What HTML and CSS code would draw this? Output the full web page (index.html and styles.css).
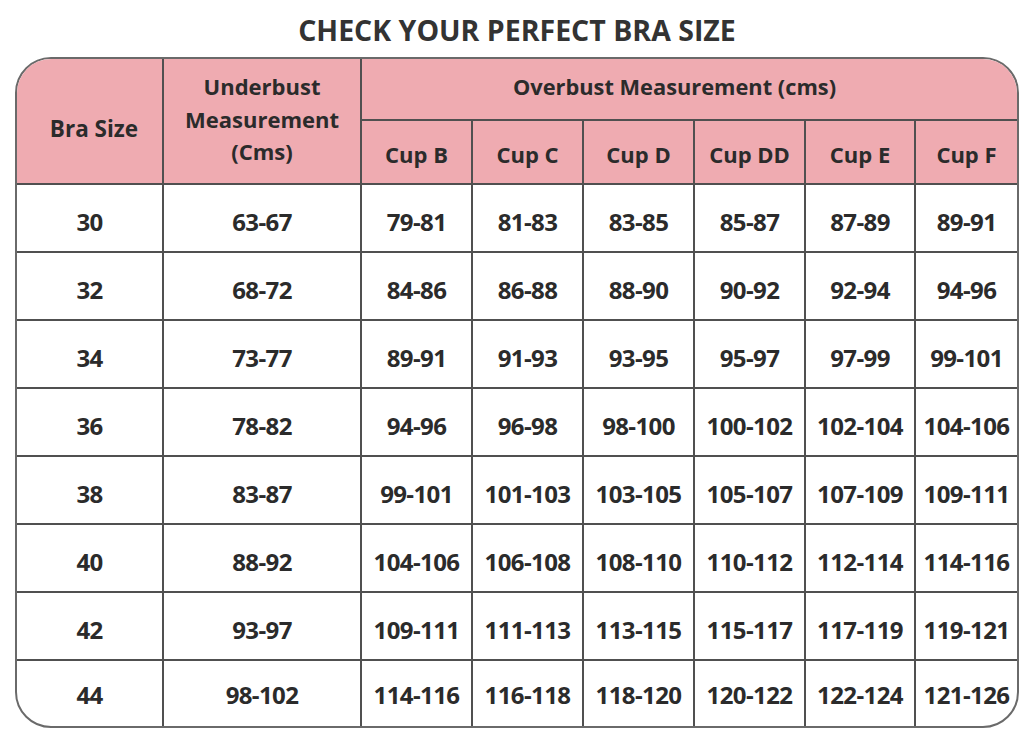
FILE: index.html
```html
<!DOCTYPE html>
<html lang="en">
<head>
<meta charset="utf-8">
<title>Check Your Perfect Bra Size</title>
<link rel="stylesheet" href="styles.css">
</head>
<body>
<h1 class="title">CHECK YOUR PERFECT BRA SIZE</h1>
<div class="chart">
  <div class="cell head span-rows size-head">Bra Size</div>
  <div class="cell head span-rows multi">Underbust<br>Measurement<br>(Cms)</div>
  <div class="cell head span-cols last-col">Overbust Measurement (cms)</div>
  <div class="cell head cup">Cup B</div>
  <div class="cell head cup">Cup C</div>
  <div class="cell head cup">Cup D</div>
  <div class="cell head cup">Cup DD</div>
  <div class="cell head cup">Cup E</div>
  <div class="cell head cup last-col">Cup F</div>

  <div class="cell">30</div><div class="cell">63-67</div><div class="cell">79-81</div><div class="cell">81-83</div><div class="cell">83-85</div><div class="cell">85-87</div><div class="cell">87-89</div><div class="cell last-col">89-91</div>
  <div class="cell">32</div><div class="cell">68-72</div><div class="cell">84-86</div><div class="cell">86-88</div><div class="cell">88-90</div><div class="cell">90-92</div><div class="cell">92-94</div><div class="cell last-col">94-96</div>
  <div class="cell">34</div><div class="cell">73-77</div><div class="cell">89-91</div><div class="cell">91-93</div><div class="cell">93-95</div><div class="cell">95-97</div><div class="cell">97-99</div><div class="cell last-col">99-101</div>
  <div class="cell">36</div><div class="cell">78-82</div><div class="cell">94-96</div><div class="cell">96-98</div><div class="cell">98-100</div><div class="cell">100-102</div><div class="cell">102-104</div><div class="cell last-col">104-106</div>
  <div class="cell">38</div><div class="cell">83-87</div><div class="cell">99-101</div><div class="cell">101-103</div><div class="cell">103-105</div><div class="cell">105-107</div><div class="cell">107-109</div><div class="cell last-col">109-111</div>
  <div class="cell">40</div><div class="cell">88-92</div><div class="cell">104-106</div><div class="cell">106-108</div><div class="cell">108-110</div><div class="cell">110-112</div><div class="cell">112-114</div><div class="cell last-col">114-116</div>
  <div class="cell">42</div><div class="cell">93-97</div><div class="cell">109-111</div><div class="cell">111-113</div><div class="cell">113-115</div><div class="cell">115-117</div><div class="cell">117-119</div><div class="cell last-col">119-121</div>
  <div class="cell last-row">44</div><div class="cell last-row">98-102</div><div class="cell last-row">114-116</div><div class="cell last-row">116-118</div><div class="cell last-row">118-120</div><div class="cell last-row">120-122</div><div class="cell last-row">122-124</div><div class="cell last-row last-col">121-126</div>
</div>
</body>
</html>
```

FILE: styles.css
```css
* { box-sizing: border-box; }

body {
  margin: 0;
  background: #ffffff;
  font-family: "Open Sans", "Liberation Sans", sans-serif;
  color: #2b2b2b;
  width: 1024px;
  height: 730px;
  overflow: hidden;
}

.title {
  margin: 0;
  padding-top: 12px;
  height: 57px;
  text-align: center;
  font-size: 28.5px;
  line-height: 37px;
  font-weight: 700;
  color: #333333;
  letter-spacing: 0;
  padding-left: 10px;
}

.chart {
  margin-left: 15px;
  width: 1004px;
  height: 671px;
  border: 2px solid #6a6a6a;
  border-radius: 36px;
  overflow: hidden;
  display: grid;
  grid-template-columns: 147px 198px 111px 111px 111px 111px 110px 1fr;
  grid-template-rows: 62px 64px repeat(7, 68px) 65px;
  background: #ffffff;
}

.cell {
  display: flex;
  align-items: center;
  justify-content: center;
  text-align: center;
  border-right: 2px solid #505050;
  border-bottom: 2px solid #505050;
  font-size: 24px;
  font-weight: 700;
  letter-spacing: -0.6px;
  padding-top: 6px;
}

.head {
  background: #efabb1;
  font-size: 22px;
  letter-spacing: 0;
  padding-top: 0;
}

.span-rows { grid-row: span 2; }
.size-head { padding-top: 14px; padding-left: 9px; font-size: 22.5px; }
.span-cols { grid-column: span 6; padding-bottom: 6px; padding-right: 30px; font-size: 21.8px; }
.multi { line-height: 32.5px; padding-bottom: 4px; }
.cup { padding-top: 4px; }

.last-col { border-right: none; }
.last-row { border-bottom: none; padding-top: 2px; }
```
